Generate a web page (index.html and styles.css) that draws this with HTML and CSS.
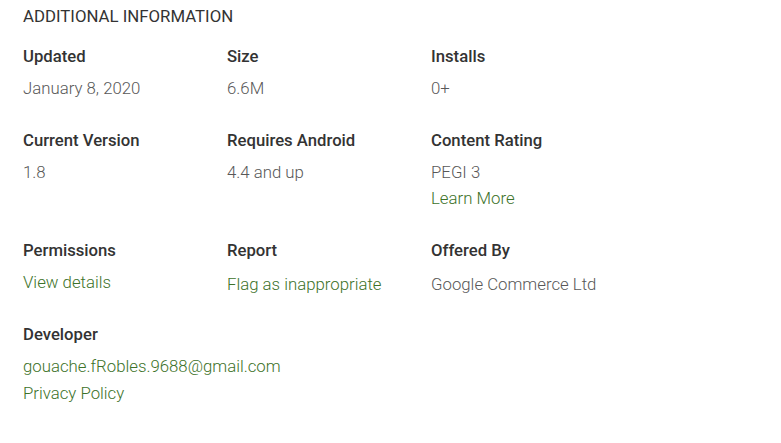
FILE: index.html
```html
<!DOCTYPE html>
<html>
<head>
<meta charset="utf-8">
<link rel="stylesheet" href="styles.css">
</head>
<body>
<div class="panel">
  <h2 class="title">ADDITIONAL INFORMATION</h2>
  <div class="grid">
    <div class="item">
      <div class="label">Updated</div>
      <div class="value">January 8, 2020</div>
    </div>
    <div class="item">
      <div class="label">Size</div>
      <div class="value">6.6M</div>
    </div>
    <div class="item">
      <div class="label">Installs</div>
      <div class="value">0+</div>
    </div>
    <div class="item">
      <div class="label">Current Version</div>
      <div class="value">1.8</div>
    </div>
    <div class="item">
      <div class="label">Requires Android</div>
      <div class="value">4.4 and up</div>
    </div>
    <div class="item">
      <div class="label">Content Rating</div>
      <div class="value">PEGI 3</div>
      <div class="value"><a class="link" href="#">Learn More</a></div>
    </div>
    <div class="item">
      <div class="label">Permissions</div>
      <div class="value"><a class="link" href="#">View details</a></div>
    </div>
    <div class="item">
      <div class="label">Report</div>
      <div class="value shifted"><a class="link" href="#">Flag as inappropriate</a></div>
    </div>
    <div class="item">
      <div class="label">Offered By</div>
      <div class="value shifted">Google Commerce Ltd</div>
    </div>
    <div class="item">
      <div class="label">Developer</div>
      <div class="value"><a class="link" href="#">gouache.fRobles.9688@gmail.com</a></div>
      <div class="value tall"><a class="link" href="#">Privacy Policy</a></div>
    </div>
  </div>
</div>
</body>
</html>
```
FILE: styles.css
```css
html, body {
  margin: 0;
  padding: 0;
  background: #ffffff;
}
body {
  font-family: Roboto, "Liberation Sans", Arial, sans-serif;
  color: #333333;
}
.panel {
  padding: 4px 23px 0 23px;
}
.title {
  margin: 0;
  font-size: 16.8px;
  font-weight: 400;
  line-height: 24px;
  color: #333333;
}
.grid {
  display: grid;
  grid-template-columns: 204px 204px 204px;
  row-gap: 28px;
  margin-top: 17px;
}
.label {
  font-size: 16.7px;
  font-weight: 500;
  line-height: 24px;
  color: #333333;
  margin-bottom: 6px;
}
.value {
  font-size: 16.8px;
  font-weight: 300;
  line-height: 26px;
  color: #585858;
}
.value.shifted {
  padding-top: 2px;
  margin-bottom: -2px;
}
.value.tall {
  line-height: 28px;
}
.link {
  color: #3d7229;
  text-decoration: none;
}
```
